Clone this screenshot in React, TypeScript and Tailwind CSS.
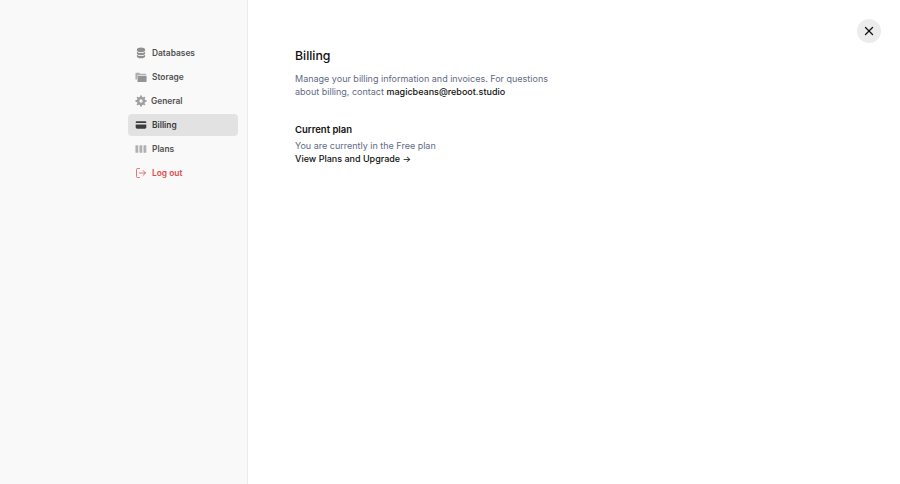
import React from "react";
import { LogOut, X } from "lucide-react";

const Db = () => (
  <svg width="12" height="12" viewBox="0 0 14 14" fill="#8f8f8f">
    <path d="M2.2 3c0-1.300 2.200-2.300 4.800-2.300s4.800 1 4.800 2.300v1.100c0 1.100-2.200 2-4.800 2s-4.800-.9-4.800-2z" />
    <path d="M2.2 5.600C3.200 6.600 5 7 7 7s3.800-.4 4.800-1.400v1.900c0 1.100-2.200 2-4.800 2s-4.800-.9-4.800-2z" />
    <path d="M2.2 9.100c1 1 2.800 1.400 4.800 1.400s3.800-.4 4.800-1.400V11c0 1.200-2.200 2.200-4.800 2.200S2.200 12.200 2.200 11z" />
  </svg>
);
const Folder = () => (
  <svg width="12" height="12" viewBox="0 0 14 14" fill="#b0b0b0">
    <path d="M1 2h4l1 1.300h6.500a.8.800 0 0 1 .5.700v.6H3.500L2.500 10H1a.5.500 0 0 1-.5-.5V2.500A.5.500 0 0 1 1 2z" />
    <path d="M3.500 5.500h10V12a.8.800 0 0 1-.8.800H2.800z" fill="#949494" />
  </svg>
);
const Gear = () => (
  <svg width="12" height="12" viewBox="0 0 14 14">
    <circle cx="7" cy="7" r="3.400" fill="none" stroke="#a0a0a0" strokeWidth="3" />
    <g stroke="#a0a0a0" strokeWidth="2.200">
      <path d="M7 .6v2M7 11.400v2M.6 7h2M11.400 7h2M2.500 2.500l1.400 1.400M10.100 10.100l1.400 1.400M2.500 11.500l1.400-1.400M10.100 3.900l1.400-1.400" />
    </g>
  </svg>
);
const Card = () => (
  <svg width="12" height="12" viewBox="0 0 14 14" fill="#3c3c3c">
    <path d="M.8 4.300c0-1 .7-1.600 1.600-1.600h9.200c.9 0 1.600.6 1.600 1.600v.5H.8z" />
    <path d="M.8 6.300h12.400v3.400c0 1-.7 1.600-1.600 1.600H2.400c-.9 0-1.600-.6-1.600-1.600z" />
  </svg>
);
const Columns = () => (
  <svg width="12" height="12" viewBox="0 0 14 14" fill="#b0b0b0">
    <rect x="0.500" y="2.500" width="3.300" height="9" rx=".6" />
    <rect x="5.200" y="2.500" width="3.300" height="9" rx=".6" />
    <rect x="9.900" y="2.500" width="3.300" height="9" rx=".6" />
  </svg>
);

const rows = [
  { label: "Databases", icon: <Db />, gap: "gap-[5px]" },
  { label: "Storage", icon: <Folder />, gap: "gap-[5px]" },
  { label: "General", icon: <Gear />, gap: "gap-[4px]" },
  { label: "Billing", icon: <Card />, gap: "gap-[5px]", active: true },
  { label: "Plans", icon: <Columns />, gap: "gap-[5px]" },
];

export default function App() {
  return (
    <div className="flex h-[484px] w-[900px] overflow-hidden bg-white font-['Inter',sans-serif]">
      <aside className="w-[248px] shrink-0 border-r border-[#ececec] bg-[#f9f9f9] pl-[128px] pt-[42px]">
        <nav className="flex w-[110px] flex-col gap-[2px]">
          {rows.map((r) => (
            <div
              key={r.label}
              className={`flex h-[22px] items-center rounded-[4px] pl-[7px] text-[8.400px] font-semibold ${r.gap} ${
                r.active ? "bg-[#e2e2e2] text-[#3a3a3a]" : "text-[#505050]"
              }`}
            >
              {r.icon}
              <span>{r.label}</span>
            </div>
          ))}
          <div className="flex h-[22px] items-center gap-[5px] pl-[7px] text-[8.400px] font-semibold text-[#dc4a4a]">
            <LogOut size={12} strokeWidth={1.500} />
            <span>Log out</span>
          </div>
        </nav>
      </aside>
      <main className="relative flex-1 pl-[47px] pt-[47px]">
        <h1 className="text-[12.300px] leading-[18px] font-medium text-[#111111]">Billing</h1>
        <p className="mt-[7px] w-[262px] text-[9px] leading-[13px] text-[#5f6b85]">
          Manage your billing information and invoices. For questions about billing, contact{" "}
          <span className="font-medium text-[#111111]">magicbeans@reboot.studio</span>
        </p>
        <h2 className="mt-[25px] text-[9.500px] leading-[14px] font-semibold text-[#111111]">Current plan</h2>
        <p className="mt-[2px] text-[9px] leading-[13px] text-[#5f6b85]">You are currently in the Free plan</p>
        <p className="text-[9px] leading-[13px] font-medium text-[#111111]">View Plans and Upgrade →</p>
        <button className="absolute right-[19px] top-[19px] flex h-[24px] w-[24px] items-center justify-center rounded-full bg-[#ececec] text-[#111111]">
          <X size={14} strokeWidth={2.200} />
        </button>
      </main>
    </div>
  );
}
